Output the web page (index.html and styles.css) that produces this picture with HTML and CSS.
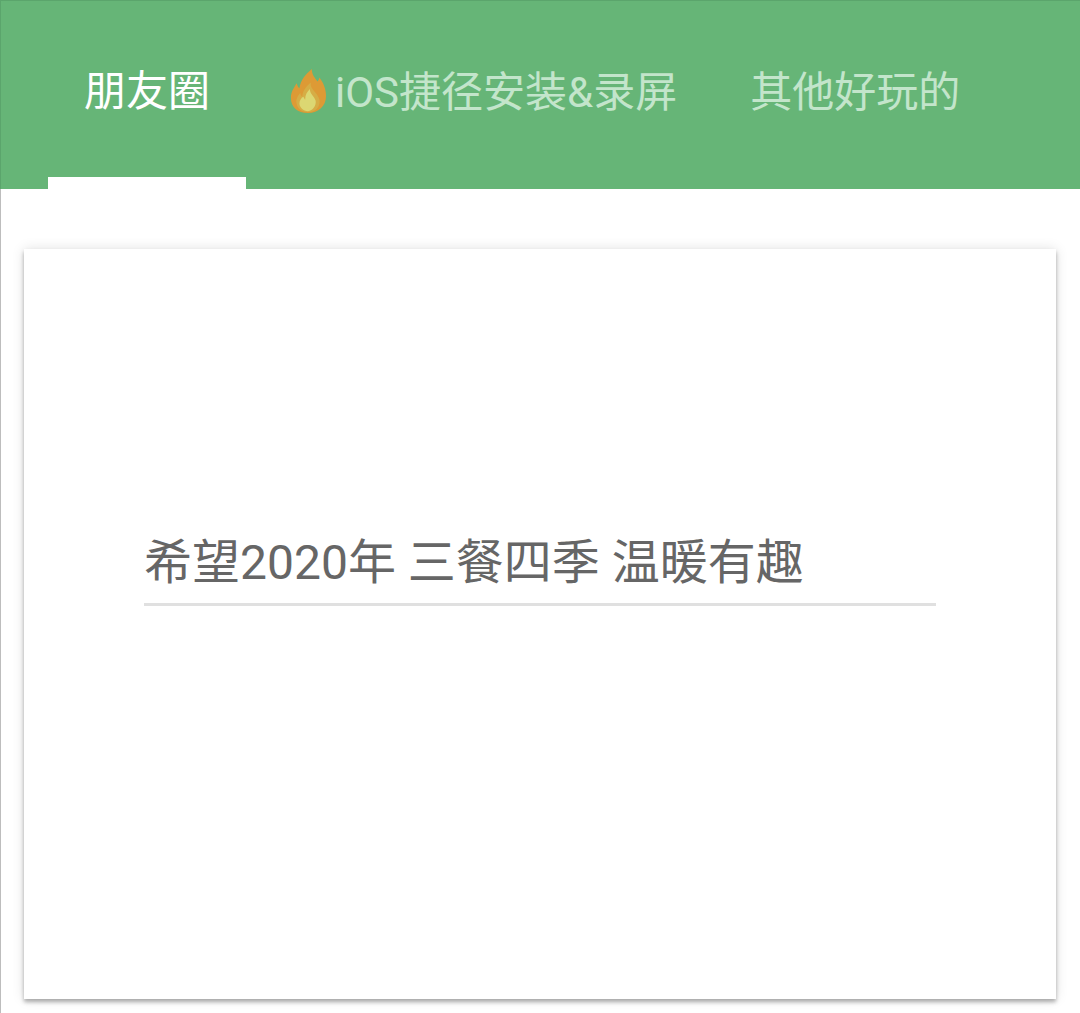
FILE: index.html
```html
<!DOCTYPE html>
<html lang="zh-CN">
<head>
    <meta charset="UTF-8">
    <meta name="viewport" content="width=device-width, initial-scale=1.0">
    <title>朋友圈</title>
    <link rel="stylesheet" href="styles.css">
</head>
<body>
    <div class="tabs">
        <div class="tab active">朋友圈</div>
        <div class="tab">
            <svg class="flame" viewBox="0 0 40 48" preserveAspectRatio="none">
                <path fill="#dd9a35" d="M24 1c0 6 3 9 6 13 1-1 2-3 2-4 4 5 7 12 7 19 0 11-8 18-19 18S2 41 2 31c0-6 3-10 6-15 1 2 1 4 3 5 1-8 6-14 13-20z"/>
                <path fill="#d6ad45" d="M23 15c-1 5 3 8 6 12 2 3 4 6 3 10-1 6-6 9-12 9S9 43 8 37c-1-4 1-8 4-11 0 2 1 3 2 4 0-6 4-11 9-15z"/>
                <path fill="#dcd772" d="M22 22c0 5 4 7 6 12 1 5-3 11-8 11s-9-4-9-8c0-3 2-6 4-7 1 1 1 2 2 3 0-5 2-8 5-11z"/>
            </svg>
            <span>iOS捷径安装&amp;录屏</span>
        </div>
        <div class="tab">其他好玩的</div>
    </div>
    <div class="content">
        <div class="card">
            <div class="field">希望2020年 三餐四季 温暖有趣</div>
        </div>
    </div>
</body>
</html>
```

FILE: styles.css
```css
html, body {
    margin: 0;
    height: 100%;
    overflow: hidden;
    background: #ffffff;
    font-family: Roboto, "Noto Sans CJK SC", sans-serif;
}

/* Tabs */
.tabs {
    display: flex;
    height: 189px;
    box-sizing: border-box;
    padding-left: 47px;
    background: #66b577;
    border-top: 1px solid #5ba56c;
    border-left: 1px solid #5ba56c;
}

.tab {
    display: flex;
    align-items: center;
    height: 100%;
    box-sizing: border-box;
    padding: 0 33px 14px 40px;
    font-size: 42px;
    color: #c3e5cb;
    white-space: nowrap;
}

.tab.active {
    color: #ffffff;
    width: 198px;
    justify-content: center;
    padding: 0 0 4px 0;
    border-bottom: 12px solid #ffffff;
}

.flame {
    width: 38px;
    height: 46px;
    margin: 6px 8px 0 3px;
}

/* Card */
.content {
    height: 824px;
    box-sizing: border-box;
    padding: 60px 24px 0 23px;
    border-left: 1px solid #bdbdbd;
}

.card {
    height: 750px;
    box-sizing: border-box;
    padding: 276px 120px 0 120px;
    background: #ffffff;
    box-shadow: 0 3px 4px rgba(0, 0, 0, 0.3), 0 0 12px rgba(0, 0, 0, 0.12);
}

.field {
    height: 78px;
    font-size: 48px;
    line-height: 76px;
    color: #666666;
    white-space: nowrap;
    border-bottom: 3px solid #e0e0e0;
}
```
